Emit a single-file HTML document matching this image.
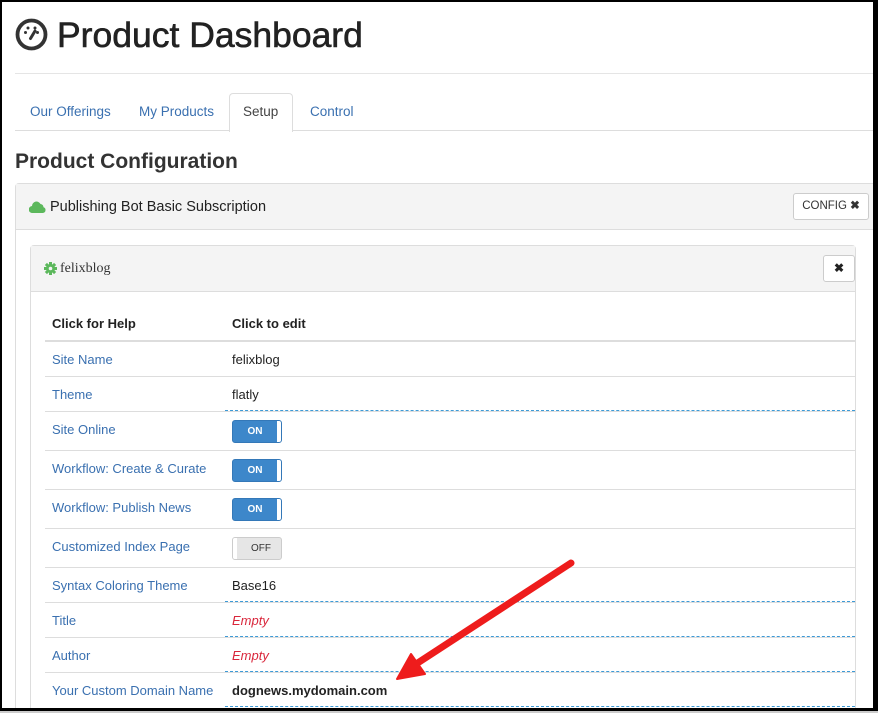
<!DOCTYPE html>
<html><head><meta charset="utf-8"><style>
*{box-sizing:border-box;margin:0;padding:0}
html,body{width:878px;height:713px;overflow:hidden}
body{position:relative;background:#fff;font-family:"Liberation Sans",Arial,sans-serif;color:#333}
.a{position:absolute}
.lnk{color:#3a70b0;font-size:13px}
.val{font-size:13px;color:#222}
.row{position:absolute;left:45px;width:810px;border-top:1px solid #ddd}
.dash{position:absolute;left:225px;width:630px;border-top:1.5px dashed #3d9ad6}
.tog{position:absolute;left:232px;width:50px;height:23px;border-radius:3px;background:#3d87ca;border:1px solid #3478b8}
.tog span{position:absolute;left:0;width:44px;top:0;line-height:21px;text-align:center;color:#fff;font-size:10px;font-weight:bold}
.tog i{position:absolute;right:0;top:0;width:4px;height:21px;background:#fff;border-radius:0 2px 2px 0}
.off{background:#e6e6e6;border:1px solid #ccc}
.off span{color:#333;left:6px;font-weight:normal}
.off i{left:0;right:auto;border-radius:2px 0 0 2px}
</style></head><body>
<svg class="a" style="left:15px;top:18px" width="33" height="33" viewBox="0 0 33 33"><circle cx="16.5" cy="16.5" r="14" fill="#fff" stroke="#333" stroke-width="3.8"/><circle cx="10.5" cy="14.5" r="1.5" fill="#333"/><circle cx="13" cy="10" r="1.5" fill="#333"/><circle cx="20" cy="10" r="1.5" fill="#333"/><circle cx="22.5" cy="14.5" r="1.5" fill="#333"/><path d="M15.5 20.5 L20 13" stroke="#333" stroke-width="3" stroke-linecap="round"/></svg>
<div class="a" style="left:57px;top:15px;font-size:35.5px;color:#222;-webkit-text-stroke:0.6px #222">Product Dashboard</div>
<div class="a" style="left:15px;top:73px;width:860px;border-top:1px solid #e5e5e5"></div>
<div class="a" style="left:15px;top:130px;width:860px;border-top:1px solid #ddd"></div>
<div class="a" style="left:229px;top:93px;width:64px;height:39px;background:#fff;border:1px solid #ddd;border-bottom:none;border-radius:4px 4px 0 0"></div>
<div class="a lnk" style="left:30px;top:104px;font-size:13.5px">Our Offerings</div>
<div class="a lnk" style="left:139px;top:104px;font-size:13.5px">My Products</div>
<div class="a" style="left:243px;top:104px;font-size:13.5px;color:#444">Setup</div>
<div class="a lnk" style="left:310px;top:104px;font-size:13.5px">Control</div>
<div class="a" style="left:15px;top:150px;font-size:21px;font-weight:bold;color:#333">Product Configuration</div>
<div class="a" style="left:15px;top:183px;width:862px;height:540px;border:1px solid #ddd;border-radius:4px"></div>
<div class="a" style="left:16px;top:184px;width:860px;height:46px;background:#f4f4f4;border-bottom:1px solid #ddd"></div>
<svg class="a" style="left:29px;top:200px" width="17" height="13" viewBox="0 0 17 13"><path d="M3.5 13 A3.5 3.5 0 0 1 3 6 A4.5 4.5 0 0 1 11.5 4 A3.5 3.5 0 0 1 14.5 7.2 A3 3 0 0 1 14 13 Z" fill="#5cb85c"/></svg>
<div class="a" style="left:50px;top:199px;font-size:14.5px;color:#222">Publishing Bot Basic Subscription</div>
<div class="a" style="left:793px;top:193px;width:76px;height:27px;background:#fff;border:1px solid #ccc;border-radius:3px;font-size:11.5px;line-height:25px;text-align:center;color:#333">CONFIG <b>✖</b></div>
<div class="a" style="left:30px;top:245px;width:826px;height:480px;border:1px solid #ddd;border-radius:4px"></div>
<div class="a" style="left:31px;top:246px;width:824px;height:46px;background:#f4f4f4;border-bottom:1px solid #ddd"></div>
<svg class="a" style="left:44px;top:262px" width="13" height="13" viewBox="0 0 13 13"><g fill="#5cb85c"><circle cx="6.5" cy="6.5" r="4.5"/><rect x="5" y="0" width="3" height="13"/><rect x="0" y="5" width="13" height="3"/><rect x="5" y="0" width="3" height="13" transform="rotate(45 6.5 6.5)"/><rect x="5" y="0" width="3" height="13" transform="rotate(-45 6.5 6.5)"/></g><circle cx="6.5" cy="6.5" r="1.8" fill="#f4f4f4"/></svg>
<div class="a" style="left:60px;top:261px;font-size:14px;font-family:'Liberation Serif',serif;color:#333">felixblog</div>
<div class="a" style="left:823px;top:255px;width:32px;height:27px;background:#fff;border:1px solid #ccc;border-radius:3px;font-size:12px;line-height:25px;text-align:center;color:#222"><b>✖</b></div>
<div class="a" style="left:52px;top:316px;font-size:13px;font-weight:bold;color:#222">Click for Help</div>
<div class="a" style="left:232px;top:316px;font-size:13px;font-weight:bold;color:#222">Click to edit</div>
<div class="row" style="top:340px;border-top:2px solid #ddd"></div>
<div class="a lnk" style="left:52px;top:352px">Site Name</div><div class="a val" style="left:232px;top:352px">felixblog</div>
<div class="row" style="top:376px"></div>
<div class="a lnk" style="left:52px;top:387px">Theme</div><div class="a val" style="left:232px;top:387px">flatly</div>
<div class="row" style="top:411px"></div><div class="dash" style="top:410px"></div>
<div class="a lnk" style="left:52px;top:422px">Site Online</div><div class="tog" style="top:420px"><span>ON</span><i></i></div>
<div class="row" style="top:450px"></div>
<div class="a lnk" style="left:52px;top:461px">Workflow: Create &amp; Curate</div><div class="tog" style="top:459px"><span>ON</span><i></i></div>
<div class="row" style="top:489px"></div>
<div class="a lnk" style="left:52px;top:500px">Workflow: Publish News</div><div class="tog" style="top:498px"><span>ON</span><i></i></div>
<div class="row" style="top:528px"></div>
<div class="a lnk" style="left:52px;top:539px">Customized Index Page</div><div class="tog off" style="top:537px"><span>OFF</span><i></i></div>
<div class="row" style="top:567px"></div>
<div class="a lnk" style="left:52px;top:578px">Syntax Coloring Theme</div><div class="a val" style="left:232px;top:578px">Base16</div>
<div class="row" style="top:602px"></div><div class="dash" style="top:601px"></div>
<div class="a lnk" style="left:52px;top:613px">Title</div><div class="a val" style="left:232px;top:613px;color:#d9263b;font-style:italic">Empty</div>
<div class="row" style="top:637px"></div><div class="dash" style="top:636px"></div>
<div class="a lnk" style="left:52px;top:648px">Author</div><div class="a val" style="left:232px;top:648px;color:#d9263b;font-style:italic">Empty</div>
<div class="row" style="top:672px"></div><div class="dash" style="top:671px"></div>
<div class="a lnk" style="left:52px;top:683px">Your Custom Domain Name</div><div class="a val" style="left:232px;top:683px;font-weight:bold">dognews.mydomain.com</div>
<div class="dash" style="top:706px"></div>
<svg class="a" style="left:0;top:0" width="878" height="713"><path d="M571 563 L413 666" stroke="#ee1c1c" stroke-width="7" stroke-linecap="round"/><path d="M397 679 L411 654 L425 674 Z" fill="#ee1c1c" stroke="#ee1c1c" stroke-width="2" stroke-linejoin="round"/></svg>
<div class="a" style="left:0;top:0;width:878px;height:2px;background:#000"></div>
<div class="a" style="left:0;top:0;width:2px;height:711px;background:#000"></div>
<div class="a" style="left:873px;top:0;width:5px;height:713px;background:#000"></div>
<div class="a" style="left:0;top:708px;width:878px;height:3px;background:#000"></div>
<div class="a" style="left:0;top:711px;width:878px;height:2px;background:#ccc"></div>
</body></html>
